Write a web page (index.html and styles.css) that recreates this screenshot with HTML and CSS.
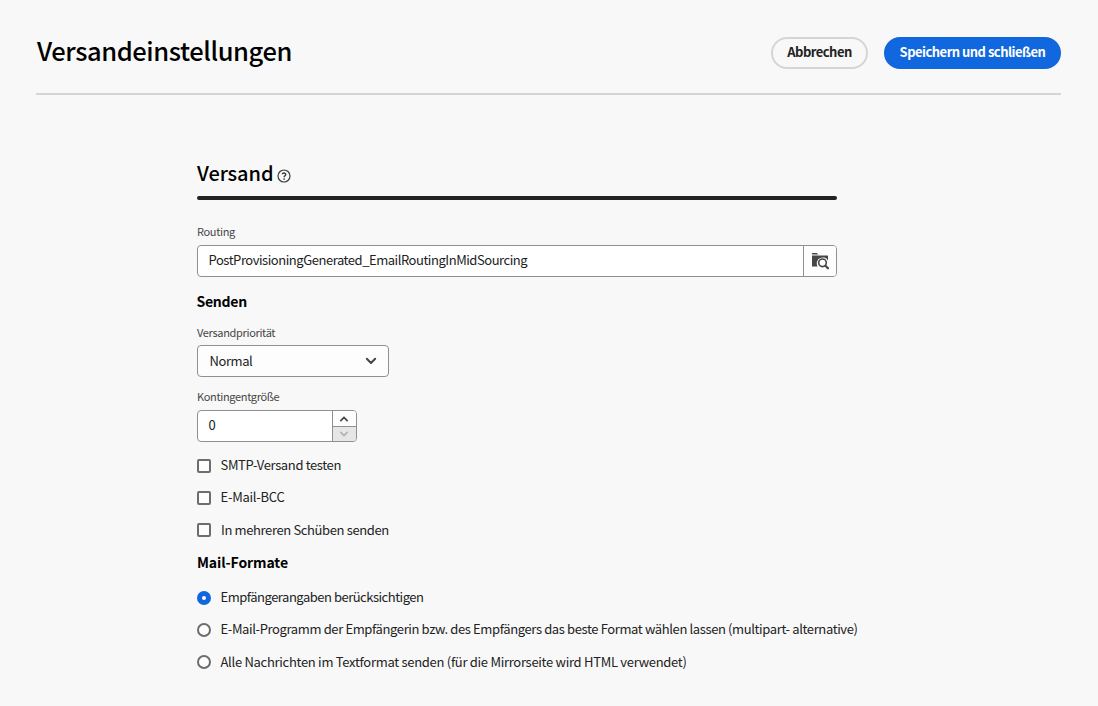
FILE: index.html
```html
<!DOCTYPE html>
<html lang="de">
<head>
<meta charset="utf-8">
<title>Versandeinstellungen</title>
<link rel="stylesheet" href="styles.css">
</head>
<body>
<header class="header">
  <h1 class="title"><span>Versandeinstellungen</span></h1>
  <button class="btn btn-outline"><span>Abbrechen</span></button>
  <button class="btn btn-primary"><span>Speichern und schließen</span></button>
</header>
<main class="main">
  <div class="section-head">
    <h2 class="section-title"><span>Versand</span></h2>
    <svg class="help" width="14" height="14" viewBox="0 0 14 14" fill="none" stroke="#3a3a3a"><circle cx="7" cy="7" r="6" stroke-width="1.2"/><path d="M5.3 5.3C5.4 3.6 8.8 3.6 8.7 5.5C8.7 6.7 7.1 6.8 7.1 8.2" stroke-width="1.4"/><circle cx="7.1" cy="10" r=".85" fill="#3a3a3a" stroke="none"/></svg>
  </div>
  <div class="rule"></div>
  <label class="label l-routing"><span>Routing</span></label>
  <div class="field routing">
    <div class="value"><span>PostProvisioningGenerated_EmailRoutingInMidSourcing</span></div>
    <button class="picker"><svg width="18" height="18" viewBox="0 0 18 18"><path d="M1 2.5V1.6Q1 1 1.6 1H5.8L7.4 2.5ZM1 3.5H16.5Q17 3.5 17 4V8.4A5.7 5.7 0 1 0 6.6 14.5H1Z" fill="#464646"/><circle cx="11.5" cy="10.8" r="4.9" fill="#fdfdfd"/><circle cx="11.5" cy="10.8" r="3.8" fill="#fdfdfd" stroke="#464646" stroke-width="1.6"/><path d="M14.4 13.7L17 16.3" stroke="#464646" stroke-width="2.2" stroke-linecap="round"/></svg></button>
  </div>
  <h3 class="subhead s-send"><span>Senden</span></h3>
  <label class="label l-prio"><span>Versandpriorität</span></label>
  <div class="field select"><span class="normal">Normal</span><svg width="12" height="8" viewBox="0 0 12 8" fill="none" stroke="#464646" stroke-width="2" stroke-linecap="round" stroke-linejoin="round"><path d="M1.8 1.8L6 6L10.2 1.8"/></svg></div>
  <label class="label l-quota"><span>Kontingentgröße</span></label>
  <div class="field number">
    <div class="value"><span>0</span></div>
    <div class="stepper">
      <div class="step"><svg width="10" height="6" viewBox="0 0 10 6" fill="none" stroke="#464646" stroke-width="1.6" stroke-linecap="round"><path d="M1.8 4.6L5 1.4L8.2 4.6"/></svg></div>
      <div class="step step-off"><svg width="10" height="6" viewBox="0 0 10 6" fill="none" stroke="#b1b1b1" stroke-width="1.6" stroke-linecap="round"><path d="M1.8 1.4L5 4.6L8.2 1.4"/></svg></div>
    </div>
  </div>
  <div class="options checks">
    <label class="option"><i class="box"></i><span class="c1">SMTP-Versand testen</span></label>
    <label class="option"><i class="box"></i><span class="c2">E-Mail-BCC</span></label>
    <label class="option"><i class="box"></i><span class="c3">In mehreren Schüben senden</span></label>
  </div>
  <h3 class="subhead s-format"><span>Mail-Formate</span></h3>
  <div class="options radios">
    <label class="option"><i class="radio radio-on"></i><span class="r1">Empfängerangaben berücksichtigen</span></label>
    <label class="option"><i class="radio"></i><span class="r2">E-Mail-Programm der Empfängerin bzw. des Empfängers das beste Format wählen lassen (multipart- alternative)</span></label>
    <label class="option"><i class="radio"></i><span class="r3">Alle Nachrichten im Textformat senden (für die Mirrorseite wird HTML verwendet)</span></label>
  </div>
</main>
</body>
</html>
```
FILE: styles.css
```css
* { box-sizing: border-box; }
body { margin: 0; width: 1098px; height: 706px; overflow: hidden; background: #f8f8f8; color: #222; font-family: "Noto Sans CJK SC", "Noto Sans", sans-serif; font-size: 13px; }
h1, h2, h3 { margin: 0; color: #000; }
button { font-family: inherit; margin: 0; padding: 0; }
span { white-space: nowrap; }
.header { display: flex; align-items: flex-start; margin: 0 37px 0 36px; height: 95px; padding-top: 37px; border-bottom: 2px solid #d5d5d5; }
.title { flex: 1; padding-left: 1px; font-size: 25.5px; font-weight: 500; line-height: 26px; letter-spacing: -0.42px; }
.btn { height: 32px; border-radius: 16px; padding-bottom: 2px; font-size: 13px; font-weight: 700; line-height: 26px; letter-spacing: -0.52px; }
.btn-outline { width: 97px; border: 2px solid #d5d5d5; background: #f8f8f8; color: #222; }
.btn-primary { width: 177px; margin-left: 16px; border: 2px solid #1167dd; background: #1167dd; color: #fff; }
.main { display: flex; flex-direction: column; width: 640px; margin-left: 197px; padding-top: 64px; }
.section-head { display: flex; align-items: flex-start; height: 37px; }
.section-title { font-size: 20px; font-weight: 500; line-height: 28px; letter-spacing: -0.1px; width: 80px; }
.help { margin-top: 10px; }
.rule { height: 4px; border-radius: 2px; background: #222; }
.label { height: 16px; font-size: 11px; line-height: 14px; letter-spacing: -0.33px; color: #464646; }
.l-routing { margin: 24px 0 5px; }
.field { display: flex; height: 32px; border: 1px solid #909090; border-radius: 4px; background: #fff; overflow: hidden; color: #222; }
.value { flex: 1; padding-left: 10.5px; line-height: 28px; letter-spacing: -0.46px; }
.picker { width: 33px; border: 0; border-left: 1px solid #909090; background: #fdfdfd; display: flex; align-items: center; justify-content: center; }
.subhead { height: 20px; font-size: 14px; font-weight: 700; line-height: 20px; }
.s-send { margin: 14px 0 0 -0.5px; letter-spacing: -0.25px; }
.l-prio { margin: 14px 0 4px; }
.select { width: 192px; align-items: center; justify-content: space-between; padding: 0 11px 0 11.5px; background: #fdfdfd; }
.normal { letter-spacing: -0.42px; padding-bottom: 2px; }
.l-quota { margin: 12px 0 5px; }
.number { width: 160px; }
.stepper { width: 24px; border-left: 1px solid #909090; display: flex; flex-direction: column; }
.step { height: 15px; display: flex; align-items: center; justify-content: center; padding-right: 1px; background: #fdfdfd; }
.step-off { border-top: 1px solid #909090; background: #e6e6e6; flex: 1; padding-bottom: 1px; }
.options { display: flex; flex-direction: column; gap: 12px; }
.option { display: flex; align-items: center; gap: 9.5px; height: 20px; line-height: 20px; }
.c1, .c2, .r1, .r2 { padding-bottom: 2px; }
.c1 { letter-spacing: -0.36px; }
.c2 { letter-spacing: -0.25px; }
.c3 { letter-spacing: -0.37px; padding-left: 0.5px; }
.r1 { letter-spacing: -0.49px; }
.r2 { letter-spacing: -0.375px; }
.r3 { letter-spacing: -0.29px; }
.box, .radio { flex: none; width: 14px; height: 14px; border: 2px solid #6d6d6d; background: #fdfdfd; }
.box { border-radius: 2px; }
.radio { border-radius: 50%; }
.radio-on { border: 5px solid #1167dd; background: #fff; }
.checks { margin-top: 14px; }
.s-format { margin-top: 13px; line-height: 18px; letter-spacing: -0.1px; }
.radios { margin-top: 15px; }
```
